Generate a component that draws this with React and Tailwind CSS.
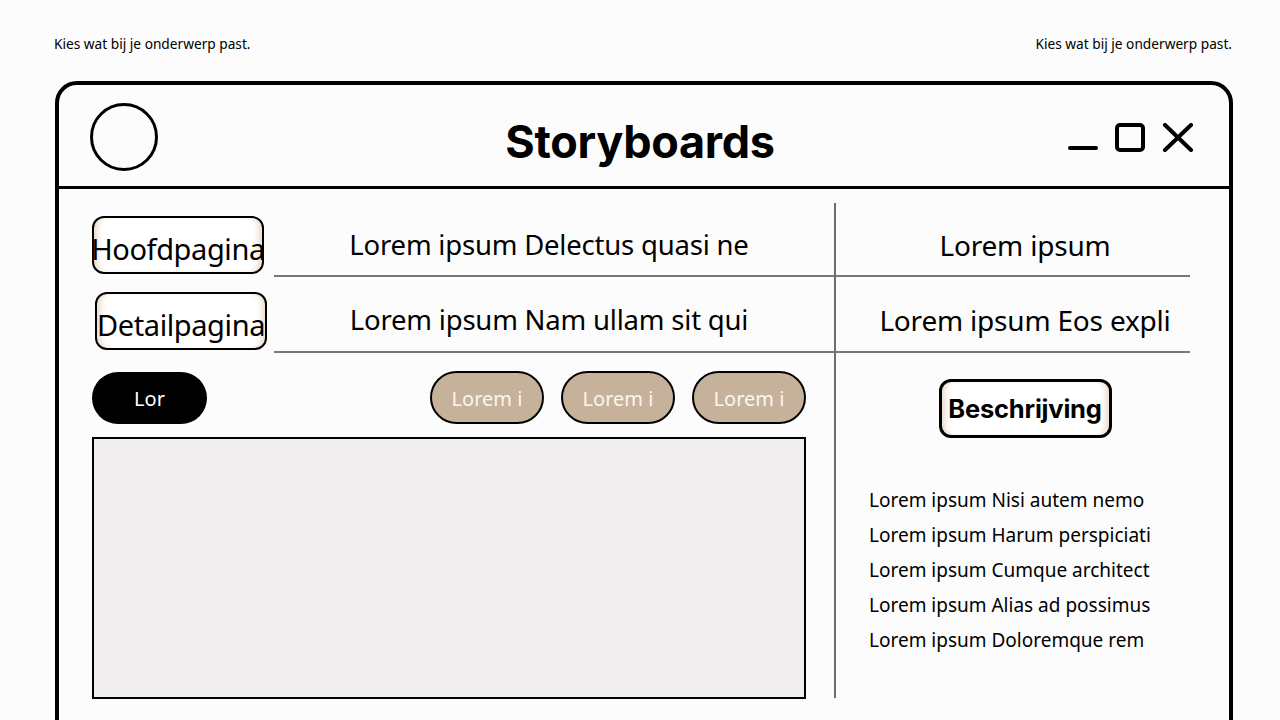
import React from "react";

const body = { fontFamily: '"Noto Sans", "Open Sans", sans-serif' };
const head = { fontFamily: 'Inter, "Liberation Sans", sans-serif' };

function NavButton({ label, className = "" }) {
  return (
    <div
      className={`flex h-[58px] w-[172px] items-center justify-center overflow-visible rounded-[12px] border-2 border-black bg-white shadow-[inset_7px_0_6px_-4px_#e8d8c4,inset_-7px_0_6px_-4px_#e8d8c4] ${className}`}
    >
      <span className="whitespace-nowrap pt-[6px] text-[29px] leading-none tracking-[-0.4px] text-black">
        {label}
      </span>
    </div>
  );
}

function Pill({ children, dark }) {
  return (
    <div
      className={
        dark
          ? "flex h-[52px] w-[115px] items-center justify-center rounded-full bg-black text-[20px] text-white"
          : "flex h-[53px] w-[114px] items-center justify-center rounded-full border-2 border-black bg-[#c6b29b] text-[20px] text-[#faf6f0]"
      }
    >
      <span className="pt-[2px]">{children}</span>
    </div>
  );
}

export default function App() {
  const rows = [
    { btn: "Hoofdpagina", mid: "Lorem ipsum Delectus quasi ne", right: "Lorem ipsum", offset: "" },
    { btn: "Detailpagina", mid: "Lorem ipsum Nam ullam sit qui", right: "Lorem ipsum Eos expli", offset: "ml-[3px]" },
  ];
  const list = [
    "Lorem ipsum Nisi autem nemo",
    "Lorem ipsum Harum perspiciati",
    "Lorem ipsum Cumque architect",
    "Lorem ipsum Alias ad possimus",
    "Lorem ipsum Doloremque rem",
  ];

  return (
    <div className="h-[720px] w-[1280px] overflow-hidden bg-[#fdfcfc] text-black" style={body}>
      <div className="flex justify-between pl-[54px] pr-[48px] pt-[35px] text-[13.7px] leading-[18px]">
        <span>Kies wat bij je onderwerp past.</span>
        <span>Kies wat bij je onderwerp past.</span>
      </div>

      <div className="ml-[55px] mt-[28px] h-[700px] w-[1178px] rounded-t-[22px] border-4 border-black bg-[#fdfcfc]">
        {/* header */}
        <div className="grid h-[104px] grid-cols-[1fr_auto_1fr] items-center border-b-[3px] border-black pl-[31px] pr-[33px]">
          <div className="mt-[2px] h-[68px] w-[68px] rounded-full border-[3px] border-black" />
          <h1 className="pr-[6px] pt-[12px] text-[45px] font-bold tracking-[-0.3px]" style={head}>
            Storyboards
          </h1>
          <div className="flex items-center justify-end gap-[17px] pr-[2px] pt-[4px]">
            <svg width="30" height="30" viewBox="0 0 30 30">
              <line x1="2" y1="25" x2="28" y2="25" stroke="black" strokeWidth="4" strokeLinecap="round" />
            </svg>
            <svg width="30" height="30" viewBox="0 0 30 30">
              <rect x="2" y="2" width="26" height="25" rx="3" fill="none" stroke="black" strokeWidth="4" />
            </svg>
            <svg width="32" height="30" viewBox="0 0 32 30">
              <path d="M3 2 L29 27 M29 2 L3 27" stroke="black" strokeWidth="4" strokeLinecap="round" />
            </svg>
          </div>
        </div>

        {/* content */}
        <div className="grid grid-cols-[744px_354px] pl-[33px] pt-[14px]">
          {rows.map((r, i) => (
            <React.Fragment key={i}>
              <div className={`flex ${i === 0 ? "h-[74px]" : "h-[76px]"}`}>
                <div className={`w-[182px] ${i === 0 ? "pt-[13px]" : "pt-[15px]"}`}>
                  <NavButton label={r.btn} className={r.offset} />
                </div>
                <div className="flex flex-1 items-center justify-center border-b-2 border-r-2 border-b-[#7a7777] border-r-[#6f6c6c] pr-[10px] pt-[12px]">
                  <span className="text-[27.5px] tracking-[-0.2px]">{r.mid}</span>
                </div>
              </div>
              <div className="flex items-center justify-center border-b-2 border-[#7a7777] pl-[24px] pt-[12px]">
                <span className="text-[28px] tracking-[-0.2px]">{r.right}</span>
              </div>
            </React.Fragment>
          ))}

          <div className="h-[345px] border-r-2 border-[#6f6c6c] pr-[28px] pt-[18px]">
            <div className="flex items-center justify-between">
              <Pill dark>Lor</Pill>
              <div className="flex gap-[17px]">
                <Pill>Lorem i</Pill>
                <Pill>Lorem i</Pill>
                <Pill>Lorem i</Pill>
              </div>
            </div>
            <div className="mt-[13px] h-[262px] w-[714px] border-2 border-black bg-[#efeded]" />
          </div>

          <div className="flex flex-col pt-[26px]">
            <div className="flex justify-center pl-[24px]">
              <div
                className="flex h-[59px] w-[173px] items-center justify-center rounded-[12px] border-[3px] border-black bg-white text-[25.5px] font-bold tracking-[-0.2px] shadow-[inset_7px_0_6px_-4px_#e8d8c4,inset_-7px_0_6px_-4px_#e8d8c4]"
                style={head}
              >
                <span className="pt-[2px]">Beschrijving</span>
              </div>
            </div>
            <ul className="mt-[49px] flex flex-col gap-[9px] pl-[33px] text-[19px] leading-[26px]">
              {list.map((t) => (
                <li key={t}>{t}</li>
              ))}
            </ul>
          </div>
        </div>
      </div>
    </div>
  );
}
